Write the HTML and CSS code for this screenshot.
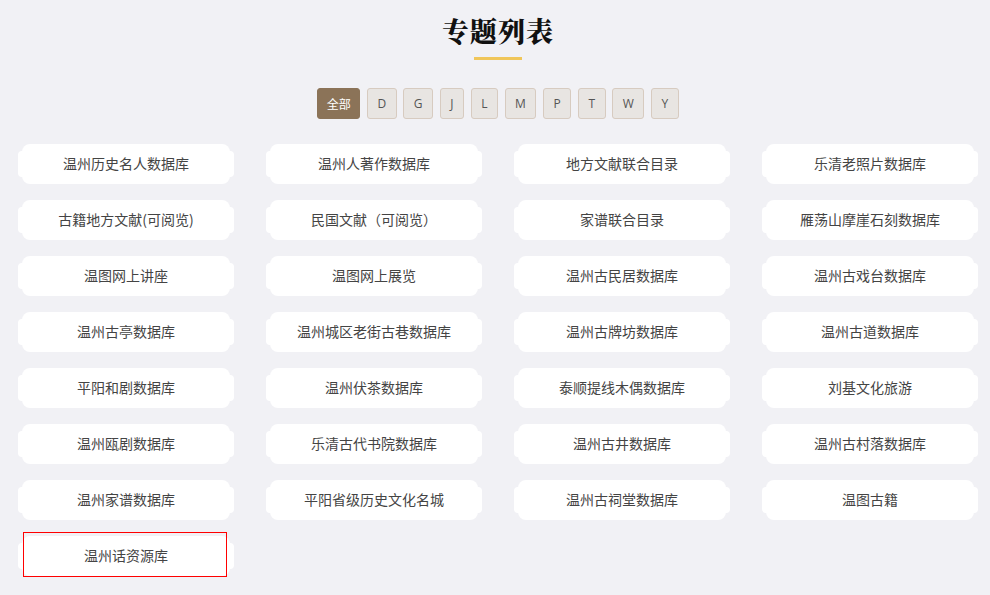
FILE: index.html
```html
<!DOCTYPE html>
<html lang="zh-CN">
<head>
    <meta charset="UTF-8">
    <meta name="viewport" content="width=device-width, initial-scale=1.0">
    <title>专题列表</title>
    <link rel="stylesheet" href="styles.css">
</head>
<body>

    <div class="page">
        <div class="heading">
            <h1 class="title">专题列表</h1>
            <div class="title-line"></div>
        </div>

        <div class="filters">
            <button class="filter active">全部</button>
            <button class="filter">D</button>
            <button class="filter">G</button>
            <button class="filter">J</button>
            <button class="filter">L</button>
            <button class="filter">M</button>
            <button class="filter">P</button>
            <button class="filter">T</button>
            <button class="filter">W</button>
            <button class="filter">Y</button>
        </div>

        <div class="topics">
            <a class="topic" href="#"><span>温州历史名人数据库</span></a>
            <a class="topic" href="#"><span>温州人著作数据库</span></a>
            <a class="topic" href="#"><span>地方文献联合目录</span></a>
            <a class="topic" href="#"><span>乐清老照片数据库</span></a>
            <a class="topic" href="#"><span>古籍地方文献(可阅览)</span></a>
            <a class="topic" href="#"><span>民国文献（可阅览）</span></a>
            <a class="topic" href="#"><span>家谱联合目录</span></a>
            <a class="topic" href="#"><span>雁荡山摩崖石刻数据库</span></a>
            <a class="topic" href="#"><span>温图网上讲座</span></a>
            <a class="topic" href="#"><span>温图网上展览</span></a>
            <a class="topic" href="#"><span>温州古民居数据库</span></a>
            <a class="topic" href="#"><span>温州古戏台数据库</span></a>
            <a class="topic" href="#"><span>温州古亭数据库</span></a>
            <a class="topic" href="#"><span>温州城区老街古巷数据库</span></a>
            <a class="topic" href="#"><span>温州古牌坊数据库</span></a>
            <a class="topic" href="#"><span>温州古道数据库</span></a>
            <a class="topic" href="#"><span>平阳和剧数据库</span></a>
            <a class="topic" href="#"><span>温州伏茶数据库</span></a>
            <a class="topic" href="#"><span>泰顺提线木偶数据库</span></a>
            <a class="topic" href="#"><span>刘基文化旅游</span></a>
            <a class="topic" href="#"><span>温州瓯剧数据库</span></a>
            <a class="topic" href="#"><span>乐清古代书院数据库</span></a>
            <a class="topic" href="#"><span>温州古井数据库</span></a>
            <a class="topic" href="#"><span>温州古村落数据库</span></a>
            <a class="topic" href="#"><span>温州家谱数据库</span></a>
            <a class="topic" href="#"><span>平阳省级历史文化名城</span></a>
            <a class="topic" href="#"><span>温州古祠堂数据库</span></a>
            <a class="topic" href="#"><span>温图古籍</span></a>
            <a class="topic focused" href="#"><span>温州话资源库</span></a>
        </div>
    </div>

</body>
</html>
```

FILE: styles.css
```css
body {
    margin: 0;
    background-color: #f1f1f5;
    font-family: "Noto Sans CJK SC", "Noto Sans", sans-serif;
    color: #333;
}
.page {
    width: 960px;
    margin-left: 18px;
    padding-bottom: 20px;
}
.heading {
    padding-top: 15px;
    text-align: center;
}
.title {
    margin: 0;
    font-family: "Noto Serif CJK SC", "Noto Sans CJK SC", serif;
    font-size: 27px;
    font-weight: 900;
    line-height: 32px;
    letter-spacing: 1px;
    color: #111;
}
.title-line {
    width: 48px;
    height: 3px;
    margin: 10px auto 0;
    background-color: #f0c65a;
}
.filters {
    display: flex;
    justify-content: center;
    gap: 6.7px;
    margin-top: 28px;
}
.filter {
    height: 31px;
    padding: 0 9.5px;
    background-color: #e8e5e2;
    border: 1px solid #d7cbc0;
    border-radius: 3px;
    font-family: "Open Sans", "Noto Sans", sans-serif;
    font-size: 12px;
    color: #555;
    cursor: pointer;
}
.filter.active {
    width: 43px;
    padding: 0;
    background-color: #8b7358;
    border-color: #8b7358;
    color: #fff;
    font-family: "Noto Sans CJK SC", sans-serif;
}
.topics {
    display: grid;
    grid-template-columns: repeat(4, 216px);
    column-gap: 32px;
    row-gap: 16px;
    margin-top: 25px;
}
.topic {
    position: relative;
    z-index: 0;
    display: flex;
    align-items: center;
    justify-content: center;
    box-sizing: border-box;
    height: 40px;
    padding-bottom: 2px;
    margin: 0 4px;
    background-color: #fff;
    border-radius: 8px;
    font-size: 14px;
    color: #444;
    text-decoration: none;
}
.topic::before {
    content: "";
    position: absolute;
    left: -4px;
    right: -4px;
    top: 7px;
    bottom: 7px;
    background-color: #fff;
    border-radius: 4px;
    z-index: -1;
}
.topic span {
    position: relative;
}
.topic.focused::after {
    content: "";
    position: absolute;
    left: 1px;
    right: 3px;
    top: -4px;
    bottom: -1px;
    border: 1px solid #f00;
}
```
